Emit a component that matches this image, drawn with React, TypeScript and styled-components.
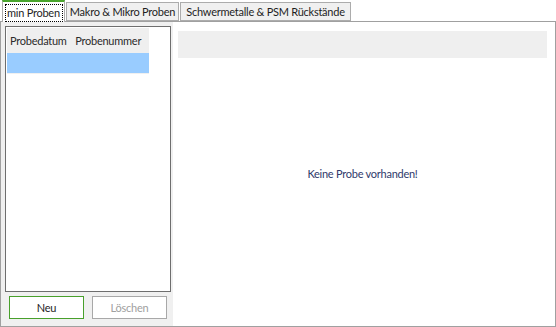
import * as React from 'react'
import styled, { createGlobalStyle } from 'styled-components'

const GlobalStyle = createGlobalStyle`
  html, body {
    margin: 0;
    padding: 0;
    background: #ffffff;
  }
  body {
    font-family: Lato, 'Liberation Sans', Arial, sans-serif;
    font-size: 11px;
    letter-spacing: -0.25px;
    color: #1e1e1e;
  }
`

const Window = styled.div`
  width: 556px;
  height: 327px;
  display: flex;
  flex-direction: column;
  background: #ffffff;
`

const TabStrip = styled.div`
  display: flex;
  align-items: flex-end;
  height: 21px;
  padding-left: 2px;
`

const Tab = styled.div<{ $active?: boolean; $w: number }>`
  box-sizing: border-box;
  width: ${p => p.$w}px;
  height: ${p => (p.$active ? '22px' : '19px')};
  margin-bottom: ${p => (p.$active ? '-1px' : '0')};
  padding: ${p => (p.$active ? '1px 1px 0 2px' : '0 0 1px 0')};
  background: ${p => (p.$active ? '#ffffff' : '#f0f0f0')};
  border: 1px solid #acacac;
  border-top: ${p => (p.$active ? '2px solid #4aa52e' : '1px solid #acacac')};
  border-bottom: ${p => (p.$active ? 'none' : '1px solid #acacac')};
  margin-right: 1px;
  position: relative;
  z-index: ${p => (p.$active ? 1 : 0)};
  display: flex;
  align-items: center;
  justify-content: center;
  white-space: nowrap;
  overflow: hidden;
  color: #1e1e1e;
`

const FocusBox = styled.span`
  display: block;
  flex: 1;
  border: 1px dotted #000;
  padding: 0 0 1px 1px;
  line-height: 15px;
  overflow: hidden;
`

const Panel = styled.div`
  flex: 1;
  box-sizing: border-box;
  border: 1px solid #a0a0a0;
  display: flex;
  min-height: 0;
`

const LeftColumn = styled.div`
  width: 172px;
  background: #f0f0f0;
  display: flex;
  flex-direction: column;
  padding: 4px 0 7px 4px;
  box-sizing: border-box;
`

const ListBox = styled.div`
  flex: 1;
  border: 1px solid #6e6e6e;
  background: #ffffff;
  margin-right: 2px;
  padding: 1px 0 0 1px;
  display: flex;
  flex-direction: column;
`

const HeaderRow = styled.div`
  display: flex;
  width: 142px;
  height: 25px;
  background: #efefef;
  align-items: center;
  color: #2b2b2b;
`

const HeaderCell = styled.div<{ $w: number }>`
  width: ${p => p.$w}px;
  padding-left: 3px;
  white-space: nowrap;
`

const SelectedRow = styled.div`
  width: 142px;
  height: 20px;
  background: #99ccff;
  border-bottom: 1px solid #f0f0f0;
`

const ButtonRow = styled.div`
  display: flex;
  gap: 8px;
  padding: 4px 0 0 4px;
  height: 23px;
`

const Button = styled.div<{ $primary?: boolean }>`
  box-sizing: border-box;
  width: 75px;
  height: 23px;
  border: 1px solid ${p => (p.$primary ? '#48a02c' : '#a8a8a8')};
  background: #ffffff;
  color: ${p => (p.$primary ? '#1e1e1e' : '#a0a0a0')};
  display: flex;
  align-items: center;
  justify-content: center;
`

const RightColumn = styled.div`
  flex: 1;
  display: flex;
  flex-direction: column;
  padding: 9px 8px 0 5px;
`

const InfoBar = styled.div`
  height: 27px;
  background: #efefef;
`

const EmptyMessage = styled.div`
  flex: 1;
  display: flex;
  align-items: center;
  justify-content: center;
  color: #2f3a6b;
  padding-bottom: 38px;
`

export default function App() {
  return (
    <Window>
      <GlobalStyle />
      <TabStrip>
        <Tab $active $w={63}>
          <FocusBox>min Proben</FocusBox>
        </Tab>
        <Tab $w={113}>Makro &amp; Mikro Proben</Tab>
        <Tab $w={171}>Schwermetalle &amp; PSM Rückstände</Tab>
      </TabStrip>
      <Panel>
        <LeftColumn>
          <ListBox>
            <HeaderRow>
              <HeaderCell $w={65}>Probedatum</HeaderCell>
              <HeaderCell $w={77}>Probenummer</HeaderCell>
            </HeaderRow>
            <SelectedRow />
          </ListBox>
          <ButtonRow>
            <Button $primary>Neu</Button>
            <Button>Löschen</Button>
          </ButtonRow>
        </LeftColumn>
        <RightColumn>
          <InfoBar />
          <EmptyMessage>Keine Probe vorhanden!</EmptyMessage>
        </RightColumn>
      </Panel>
    </Window>
  )
}
